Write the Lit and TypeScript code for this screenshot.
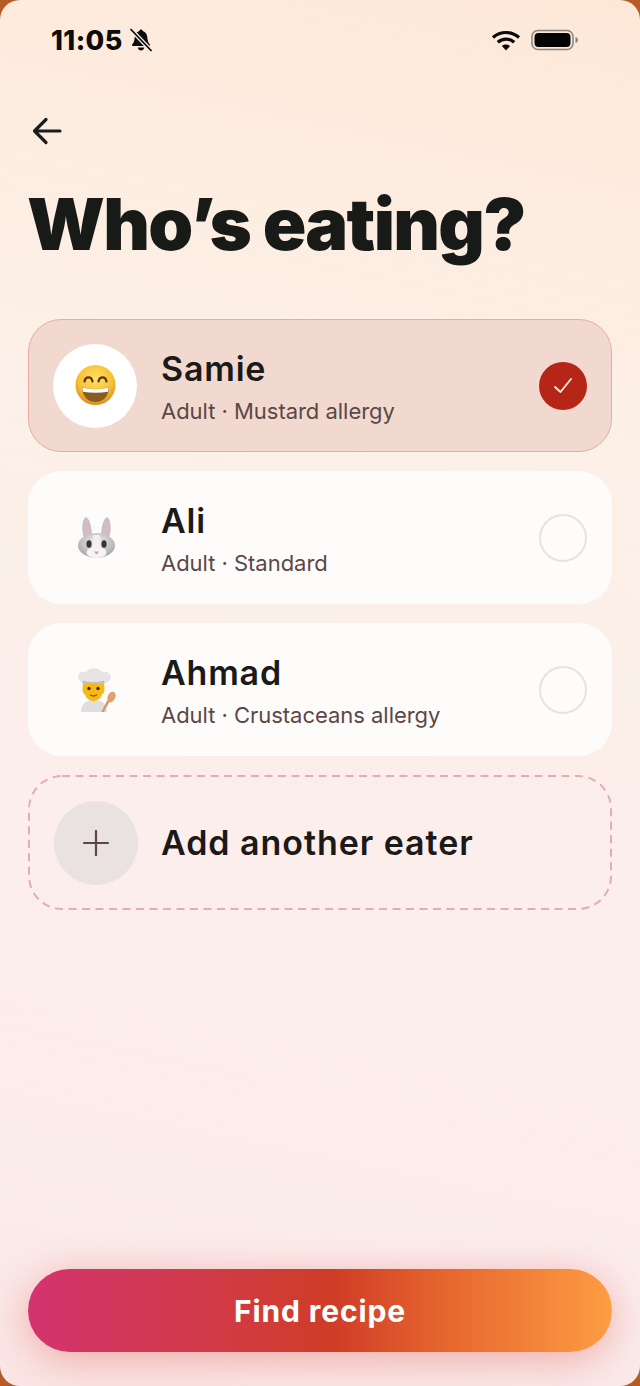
import { css, html, LitElement, svg } from "lit";
import { customElement } from "lit/decorators.js";

type Eater = { name: string; note: string; face: string; selected?: boolean };

const eaters: Eater[] = [
	{ name: "Samie", note: "Adult · Mustard allergy", face: "grin", selected: true },
	{ name: "Ali", note: "Adult · Standard", face: "rabbit" },
	{ name: "Ahmad", note: "Adult · Crustaceans allergy", face: "cook" },
];

const faces: Record<string, unknown> = {
	grin: svg`
		<defs>
			<radialGradient id="grin-skin" cx="50%" cy="35%" r="65%">
				<stop offset="0" stop-color="#ffe06a" />
				<stop offset="0.65" stop-color="#f8c034" />
				<stop offset="1" stop-color="#dd8a1c" />
			</radialGradient>
		</defs>
		<circle cx="22.500" cy="21" r="20" fill="url(#grin-skin)" />
		<path d="M11.500 17.500c1-5.500 7-5.500 8 0M25.500 17.500c1-5.500 7-5.500 8 0" fill="none" stroke="#5b3512" stroke-width="2.200" stroke-linecap="round" />
		<path d="M9 23.500c9 2 18 2 27 0 0 8.500-6 14.500-13.500 14.500S9 32 9 23.500z" fill="#8a5a22" />
		<path d="M9.200 23.700c9 1.900 17.600 1.900 26.600 0l-.7 4c-8.300 1.400-16.900 1.400-25.200 0z" fill="#fff" />
	`,
	rabbit: svg`
		<defs>
			<radialGradient id="rabbit-fur" cx="50%" cy="35%" r="70%">
				<stop offset="0" stop-color="#f3eff0" />
				<stop offset="1" stop-color="#a39da2" />
			</radialGradient>
		</defs>
		<path d="M11 22C8 13 9 3 13 1c4 2 6 11 6 20zM36 22c3-9 2-19-2-21-4 2-6 11-6 20z" fill="#c7c1c4" />
		<path d="M12.500 20c-1.500-6-1-12 .8-15 1.800 3 3 9 3 15zM34.500 20c1.500-6 1-12-.8-15-1.800 3-3 9-3 15z" fill="#dcb9c0" />
		<ellipse cx="23.500" cy="29.500" rx="18.500" ry="12.500" fill="url(#rabbit-fur)" />
		<ellipse cx="23.500" cy="36.500" rx="10" ry="5.500" fill="#f6f3f3" />
		<path d="M20.500 19h6l1.500 13h-9z" fill="#f3f0f0" />
		<ellipse cx="16" cy="28" rx="2.600" ry="3.800" fill="#38343a" />
		<ellipse cx="31" cy="28" rx="2.600" ry="3.800" fill="#38343a" />
		<path d="M21 35.500h5l-2.500 3z" fill="#e78fa6" />
	`,
	cook: svg`
		<path d="M8 44c0-8 5-12 13-12s13 4 13 12z" fill="#dfdddd" />
		<path d="M10 14h21l.5 9c-.5 2-1.500 3-2.500 3.500-1.200 4-4.500 6.500-8.500 6.500s-7.300-2.500-8.500-6.500C11 26 10 25 9.500 23z" fill="#f5bb14" />
		<circle cx="16" cy="20.500" r="1.700" fill="#4a2d12" />
		<circle cx="25" cy="20.500" r="1.700" fill="#4a2d12" />
		<path d="M17.500 27c2 1.300 4 1.300 6 0" fill="none" stroke="#8a4b1c" stroke-width="1.300" stroke-linecap="round" />
		<path d="M10 15.500C7 14 5 11.500 5 8.500c0-3.500 4.500-5.500 8-4.500 3-5 13-5 16 0 4-1 9 1 9 4.500 0 3-2 5.500-7 7z" fill="#e6e4e4" />
		<path d="M10 12.500c7 2 14 2 21 0l.5 3.500h-22z" fill="#c2bebe" />
		<path d="M30 43l6.500-12" stroke="#d99663" stroke-width="2.600" stroke-linecap="round" />
		<ellipse cx="38.500" cy="29" rx="3.800" ry="5.500" transform="rotate(25 38.500 29)" fill="#e2a06c" />
	`,
};

@customElement("app-root")
export class AppRoot extends LitElement {
	static override styles = css`
		:host {
			display: block;
			width: 640px;
			height: 1386px;
			background: #b85a26;
			font-family: Inter, "Liberation Sans", sans-serif;
			color: #1b1a19;
		}

		.screen {
			box-sizing: border-box;
			height: 100%;
			display: flex;
			flex-direction: column;
			padding: 0 28px 34px;
			border-radius: 20px;
			overflow: hidden;
			background: linear-gradient(192deg, #fde8d8 0%, #fcf0e7 30%, #fbeeeb 60%, #fbecec 85%, #fae6e5 100%);
		}

		.status {
			display: flex;
			align-items: center;
			height: 28px;
			margin-top: 26px;
			padding: 0 33px 0 23px;
		}

		.time {
			font-size: 27px;
			font-weight: 800;
			letter-spacing: 0.4px;
			color: #0c0c0c;
		}

		.bell {
			width: 24px;
			height: 24px;
			margin-left: 6px;
		}

		.wifi {
			width: 30px;
			height: 24px;
			margin-left: auto;
		}

		.battery {
			width: 48px;
			height: 24px;
			margin-left: 10px;
		}

		.back {
			display: block;
			width: 30px;
			height: 30px;
			margin: 62px 0 0 4px;
		}

		h1 {
			margin: 34px 0 0 -1px;
			font-size: 72px;
			line-height: 88px;
			font-weight: 900;
			letter-spacing: -1.7px;
			color: #181a18;
		}

		.list {
			display: flex;
			flex-direction: column;
			gap: 19px;
			margin-top: 51px;
		}

		.card {
			box-sizing: border-box;
			height: 133px;
			display: flex;
			align-items: center;
			gap: 24px;
			padding: 0 24px;
			border: 1px solid transparent;
			border-radius: 33px;
			background: #fefcfb;
		}

		.card.selected {
			background: #f2d9d0;
			border-color: #e6aca4;
		}

		.avatar {
			flex: none;
			width: 84px;
			height: 84px;
			display: flex;
			align-items: center;
			justify-content: center;
			border-radius: 50%;
			background: #fff;
		}

		.avatar svg {
			width: 44px;
			height: 44px;
		}

		.card:not(.selected) .avatar {
			background: transparent;
		}

		.info {
			flex: 1;
			min-width: 0;
			padding-top: 1px;
		}

		.name {
			font-size: 34px;
			line-height: 42px;
			font-weight: 600;
			letter-spacing: 0.8px;
		}

		.note {
			margin-top: 7px;
			font-size: 22px;
			line-height: 28px;
			letter-spacing: -0.03px;
			color: #5c4745;
		}

		.mark {
			flex: none;
			box-sizing: border-box;
			width: 48px;
			height: 48px;
			border-radius: 50%;
			border: 2.500px solid #e6e3e1;
		}

		.mark.on {
			display: flex;
			align-items: center;
			justify-content: center;
			border: none;
			background: #b52617;
		}

		.mark svg {
			width: 24px;
			height: 24px;
		}

		.add {
			position: relative;
			box-sizing: border-box;
			height: 135px;
			margin-top: 19px;
			display: flex;
			align-items: center;
			gap: 23px;
			padding: 0 26px;
		}

		.add-frame {
			position: absolute;
			inset: 0;
			width: 100%;
			height: 100%;
		}

		.plus {
			flex: none;
			width: 84px;
			height: 84px;
			display: flex;
			align-items: center;
			justify-content: center;
			border-radius: 50%;
			background: #e9e2e1;
		}

		.plus svg {
			width: 26px;
			height: 26px;
		}

		.add-label {
			font-size: 34px;
			font-weight: 600;
			letter-spacing: 0.95px;
		}

		.find {
			margin-top: auto;
			height: 83px;
			border: none;
			border-radius: 42px;
			background: linear-gradient(90deg, #d4336f 0%, #d23a4c 28%, #cf3c26 52%, #e7672f 72%, #fd9d43 100%);
			box-shadow: 0 8px 40px rgba(220, 70, 60, 0.38);
			font: 700 30px Inter, "Liberation Sans", sans-serif;
			letter-spacing: 0.9px;
			color: #fff;
		}
	`;

	private renderCard(eater: Eater) {
		return html`
			<div class="card ${eater.selected ? "selected" : ""}">
				<div class="avatar">
					<svg viewBox="0 0 44 44">${faces[eater.face]}</svg>
				</div>
				<div class="info">
					<div class="name">${eater.name}</div>
					<div class="note">${eater.note}</div>
				</div>
				${eater.selected
					? html`<div class="mark on">
							<svg viewBox="0 0 24 24" fill="none" stroke="#fdeee8" stroke-width="1.800" stroke-linecap="round" stroke-linejoin="round">
								<path d="M4 13l5.500 5L20 5" />
							</svg>
						</div>`
					: html`<div class="mark"></div>`}
			</div>
		`;
	}

	override render() {
		return html`
			<div class="screen">
				<div class="status">
					<span class="time">11:05</span>
					<svg class="bell" viewBox="0 0 24 24">
						<path d="M12 1.500c-1 0-1.600.7-1.700 1.500C7.300 3.900 5.800 6.500 5.600 10c-.2 3-1 5-2.300 6.300-.7.7-.3 1.700.6 1.700h16.200c.9 0 1.300-1 .6-1.700-1.300-1.300-2.100-3.300-2.300-6.300C18.200 6.500 16.700 3.900 13.700 3 13.600 2.200 13 1.500 12 1.500z" fill="#0c0c0c" />
						<path d="M8.700 19.500h6.600c-.4 1.800-1.700 3-3.300 3s-2.900-1.200-3.300-3z" fill="#0c0c0c" />
						<path d="M1.500 1l21 22" stroke="#fdeee4" stroke-width="4.200" />
						<path d="M1.500 1l21 22" stroke="#0c0c0c" stroke-width="1.800" />
					</svg>
					<svg class="wifi" viewBox="0 0 30 24" fill="none" stroke="#0a0a0a" stroke-width="3.200">
						<path d="M2 9.500c7.400-6.700 18.600-6.700 26 0" />
						<path d="M6.800 14.200c4.700-4.200 11.700-4.200 16.400 0" />
						<path d="M10.900 18c2.400-1.900 5.800-1.900 8.200 0L15 22.500z" fill="#0a0a0a" stroke="none" />
					</svg>
					<svg class="battery" viewBox="0 0 48 24">
						<rect x="1" y="2.500" width="41" height="19" rx="6" fill="none" stroke="#8d8782" stroke-width="1.600" />
						<rect x="3.500" y="5" width="36" height="14" rx="4" fill="#050505" />
						<path d="M44.500 9c1.700.4 2.500 1.500 2.500 3s-.8 2.600-2.500 3z" fill="#8d8782" />
					</svg>
				</div>

				<svg class="back" viewBox="0 0 30 30" fill="none" stroke="#1c1c1c" stroke-width="3.200" stroke-linecap="round" stroke-linejoin="round">
					<path d="M28 15H3M14 3.500L2.500 15 14 26.500" />
				</svg>

				<h1>Who’s eating?</h1>

				<div class="list">${eaters.map((eater) => this.renderCard(eater))}</div>

				<div class="add">
					<svg class="add-frame" viewBox="0 0 584 135" fill="none">
						<rect x="1" y="1" width="582" height="133" rx="33" stroke="#e3aeb3" stroke-width="2" stroke-dasharray="8 5.500" />
					</svg>
					<div class="plus">
						<svg viewBox="0 0 26 26" fill="none" stroke="#5c4745" stroke-width="2.200" stroke-linecap="round">
							<path d="M1 13h24M13 1v24" />
						</svg>
					</div>
					<span class="add-label">Add another eater</span>
				</div>

				<button class="find">Find recipe</button>
			</div>
		`;
	}
}
